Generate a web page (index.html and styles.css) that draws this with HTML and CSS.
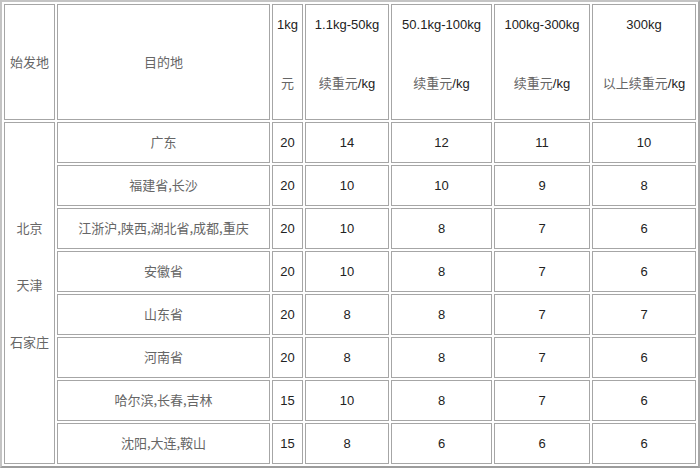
FILE: index.html
```html
<!DOCTYPE html>
<html lang="zh">
<head>
<meta charset="utf-8">
<link rel="stylesheet" href="styles.css">
</head>
<body>
<table class="rates">
  <colgroup>
    <col class="c1"><col class="c2"><col class="c3"><col class="c4"><col class="c5"><col class="c6"><col class="c7">
  </colgroup>
  <tr class="hd">
    <td class="mid"><span class="zh">始发地</span></td>
    <td class="mid"><span class="zh">目的地</span></td>
    <td class="two"><div class="l1">1kg</div><div class="l2"><span class="zh">元</span></div></td>
    <td class="two"><div class="l1">1.1kg-50kg</div><div class="l2"><span class="zh">续重元</span>/kg</div></td>
    <td class="two"><div class="l1">50.1kg-100kg</div><div class="l2"><span class="zh">续重元</span>/kg</div></td>
    <td class="two"><div class="l1">100kg-300kg</div><div class="l2"><span class="zh">续重元</span>/kg</div></td>
    <td class="two"><div class="l1">300kg</div><div class="l2"><span class="zh">以上续重元</span>/kg</div></td>
  </tr>
  <tr class="row">
    <td rowspan="8" class="origin">
      <div class="cities">
        <span class="zh">北京</span>
        <span class="zh">天津</span>
        <span class="zh">石家庄</span>
      </div>
    </td>
    <td><span class="zh">广东</span></td><td>20</td><td>14</td><td>12</td><td>11</td><td>10</td>
  </tr>
  <tr class="row"><td><span class="zh">福建省,长沙</span></td><td>20</td><td>10</td><td>10</td><td>9</td><td>8</td></tr>
  <tr class="row"><td><span class="zh">江浙沪,陕西,湖北省,成都,重庆</span></td><td>20</td><td>10</td><td>8</td><td>7</td><td>6</td></tr>
  <tr class="row"><td><span class="zh">安徽省</span></td><td>20</td><td>10</td><td>8</td><td>7</td><td>6</td></tr>
  <tr class="row"><td><span class="zh">山东省</span></td><td>20</td><td>8</td><td>8</td><td>7</td><td>7</td></tr>
  <tr class="row"><td><span class="zh">河南省</span></td><td>20</td><td>8</td><td>8</td><td>7</td><td>6</td></tr>
  <tr class="row"><td><span class="zh">哈尔滨,长春,吉林</span></td><td>15</td><td>10</td><td>8</td><td>7</td><td>6</td></tr>
  <tr class="row"><td><span class="zh">沈阳,大连,鞍山</span></td><td>15</td><td>8</td><td>6</td><td>6</td><td>6</td></tr>
</table>
</body>
</html>
```
FILE: styles.css
```css
html, body {
  margin: 0;
  padding: 0;
  background: #ffffff;
}

.rates {
  width: 700px;
  table-layout: fixed;
  border-collapse: separate;
  border-spacing: 2px;
  border: 2px solid #c4c4c4;
  border-bottom-color: #9c9c9c;
  border-right-color: #a8a8a8;
  font-family: "Liberation Sans", "Noto Sans CJK SC", sans-serif;
  font-size: 13px;
  line-height: 16px;
  color: #222222;
}

.c1 { width: 51px; }
.c2 { width: 213px; }
.c3 { width: 31px; }
.c4 { width: 84px; }
.c5 { width: 101px; }
.c6 { width: 96px; }
.c7 { width: 104px; }

.rates td {
  box-sizing: border-box;
  border: 1px solid #a6a6a6;
  padding: 0 1px;
  text-align: center;
  vertical-align: middle;
  white-space: nowrap;
}

.hd { height: 116px; }
.row { height: 41px; }

.rates td.two {
  vertical-align: top;
  padding-top: 12px;
}

.l2 {
  margin-top: 42px;
}

.zh {
  font-family: "Noto Sans CJK SC", sans-serif;
  color: #666666;
  font-weight: 400;
}

.rates td.origin {
  padding-bottom: 16px;
}

.cities {
  display: flex;
  flex-direction: column;
  align-items: center;
  gap: 41px;
}
```
